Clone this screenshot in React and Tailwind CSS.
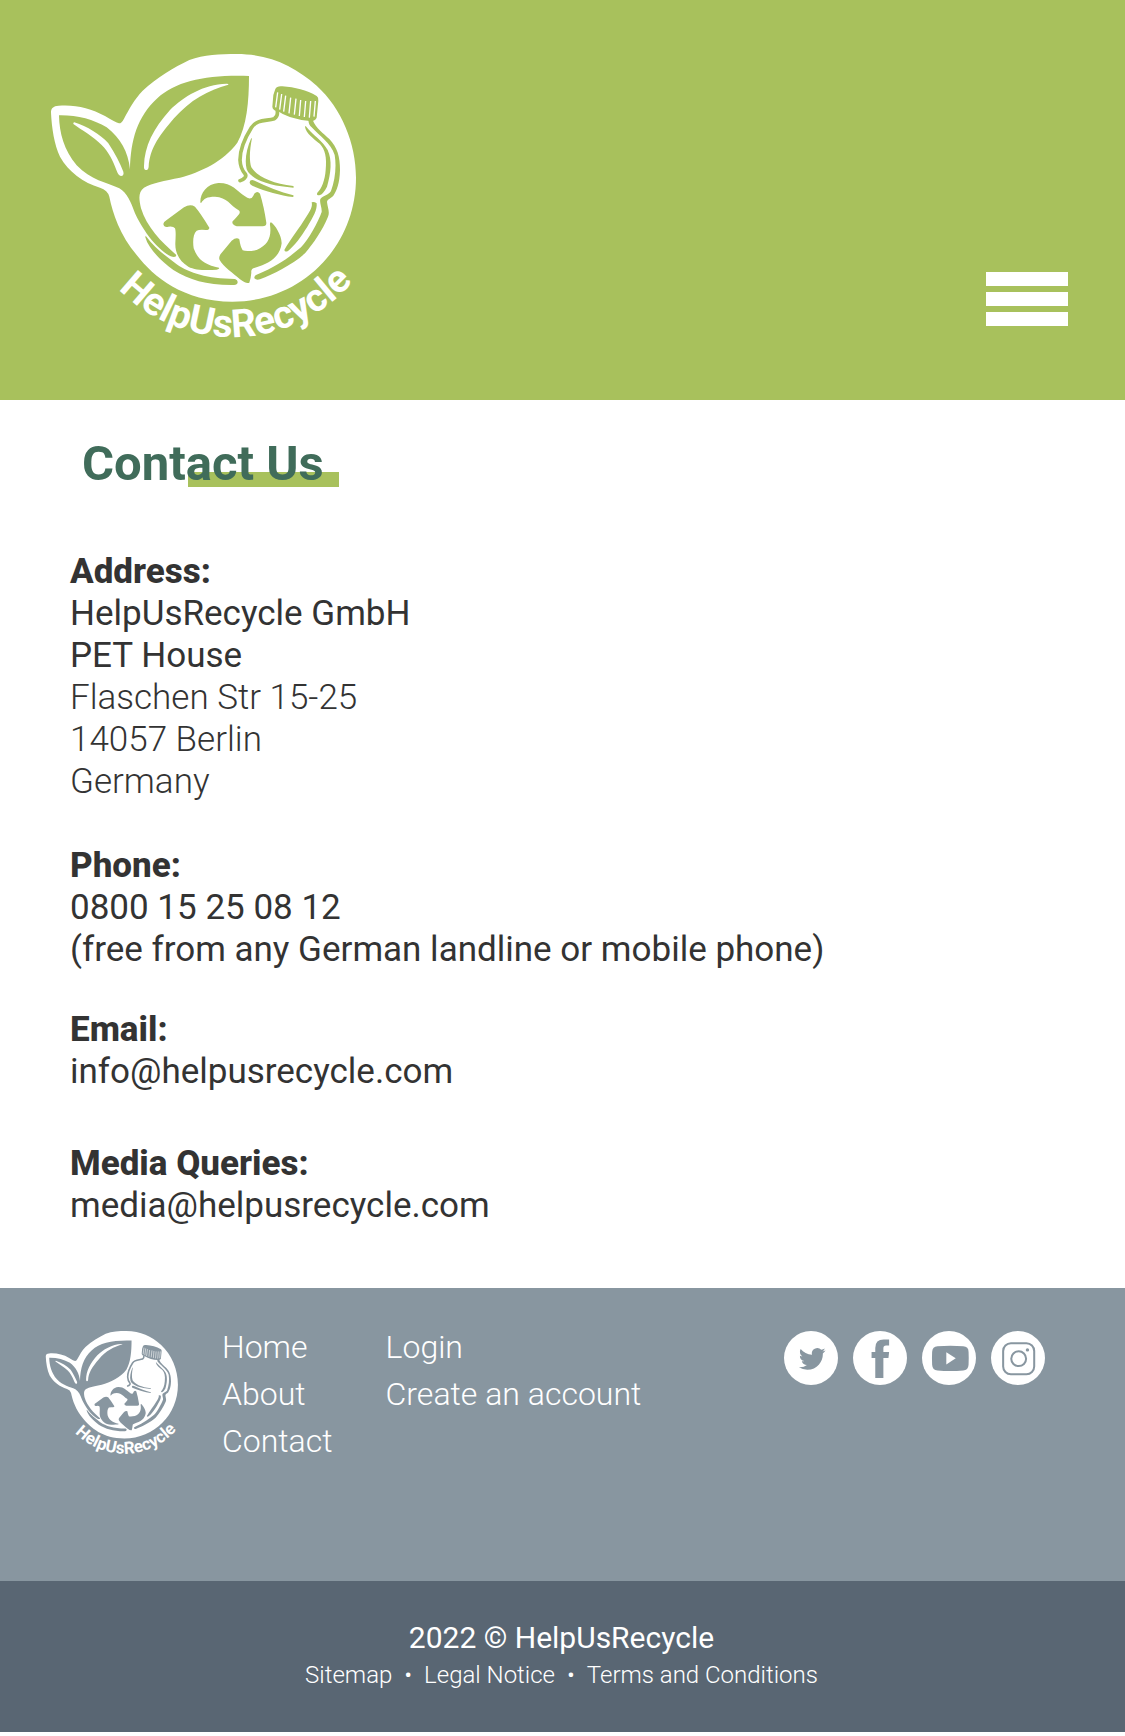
import React from "react";

/* `className` sets the backdrop colour, used for every cut-out of the emblem. */
function Logo({ className, arcId }) {
  return (
    <svg viewBox="0 0 990 930" className={className} role="img" aria-label="HelpUsRecycle">
      <path
        fill="#fff"
        d="M33 218C33 204 40 198 56 197C105 193 152 204 195 228Q226 247 237 250Q245 250 252 236C268 206 283 178 308 152C350 114 402 82 448 60C492 44 540 42 590 42C690 42 765 80 830 137C905 205 948 310 948 413C948 620 785 785 577 785C430 785 340 710 290 645C240 585 218 520 208 470Q203 450 180 443C130 428 85 395 60 350C43 315 35 262 33 218Z"
      />
      <g fill="currentColor">
        <path d="M57 226C110 225 160 238 200 262C242 295 264 335 270 388C272 300 292 230 352 175C410 122 500 104 627 108C627 185 620 260 592 308C550 365 480 397 420 413C375 422 332 430 312 443C295 455 296 475 303 505C320 560 362 605 409 645Q409 654 392 649C345 625 303 560 285 520C272 485 262 460 238 445C200 428 152 420 110 376C72 330 58 280 57 226Z" />
        <path d="M317 587C345 625 380 650 410 673C450 700 500 716 585 717Q594 720 593 727Q592 735 582 735C500 736 450 720 400 690C360 660 325 625 316 592Z" />
        <path d="M805 240C806 252 809 257 815 262C840 290 872 308 884 345C890 380 885 420 873 453C865 466 850 466 841 477C838 490 846 500 845 516C835 545 805 600 783 622C750 650 710 680 655 702Q642 706 643 714Q648 722 660 718C700 703 760 672 795 640C820 610 848 570 864 530C870 515 863 505 861 486C862 477 872 476 880 467C890 453 899 430 900 390C900 350 892 322 868 297C850 280 828 265 818 240Z" />
        <path d="M797 258C815 282 850 305 863 330C877 360 873 400 861 440Q850 462 838 466Q828 466 832 458C845 447 855 420 857 390C861 352 855 328 840 312C820 295 798 280 795 260Z" />
        <path d="M815 487Q822 484 830 490C832 510 820 530 802 560C782 592 765 615 745 632Q735 638 733 630C750 600 780 562 798 532C812 510 818 500 815 487Z" />
      </g>
      <path fill="#fff" d="M103 247C142 260 180 282 205 310C225 340 240 370 250 395Q253 407 243 408Q235 406 230 392C218 360 205 335 185 315C160 290 125 270 100 252Q99 247 103 247Z" />
      <path fill="#fff" d="M565 134C505 150 450 180 402 235C350 295 330 330 326 380Q325 390 318 390Q311 390 312 378C313 320 340 265 390 210C430 170 490 133 560 131Q567 131 565 134Z" />
      <g transform="translate(540 90)">
        <path
          fill="currentColor"
          d="M166 57Q171 47 187 49C225 52 260 60 290 78Q296 82 295 92L290 143Q285 154 270 153C235 150 205 142 178 126Q157 121 157 110L160 75Z"
        />
        <path
          fill="none"
          stroke="#fff"
          strokeWidth="4"
          d="M173 67l-6 45M185 72l-6 47M197 77l-6 48M212 83l-5 47M228 86l-5 48M242 90l-4 48M257 93l-4 48M272 93l-4 50M286 93l-4 47"
        />
        <path
          fill="none"
          stroke="currentColor"
          strokeWidth="11"
          strokeLinecap="round"
          d="M172 125Q174 139 163 146C140 154 112 146 94 173C77 200 60 240 60 270C61 290 66 301 75 311Q80 318 74 324Q69 330 60 332"
        />
        <g fill="currentColor">
          <path d="M96 204C89 240 87 270 94 292C112 320 155 340 220 348Q222 351 220 353C150 348 93 330 80 298C73 270 80 235 93 206Z" />
          <path d="M89 337Q90 327 104 332C140 350 180 365 220 376Q222 379 219 381C180 376 130 362 97 347Q88 342 89 337Z" />
        </g>
      </g>
      <g fill="currentColor" transform="translate(300 390)">
        <path d="M181 98C180 70 200 42 235 39C275 38 290 62 315 79Q325 88 335 84Q339 80 343 71Q352 61 360 71Q372 110 379 158Q380 168 368 169L290 169Q276 165 277 155Q282 151 297 133Q302 125 296 121C270 105 262 82 225 80C200 80 192 86 184 98Z" />
        <path d="M70 162Q70 156 80 150L132 112Q150 101 165 110Q182 130 208 173Q208 180 198 180Q178 178 170 182C159 192 158 215 161 235C172 268 195 285 237 293Q240 298 230 299C200 301 165 301 145 290C120 275 105 250 106 220C107 200 108 185 105 175Q100 168 85 170Q72 173 70 162Z" />
        <path d="M393 157C405 165 425 195 425 220C420 260 390 280 345 293Q332 295 334 308Q333 322 328 338Q318 342 300 328C280 310 250 290 239 270Q235 262 242 252L275 212Q290 200 298 208Q301 230 308 241Q320 246 350 240C385 225 395 200 390 165Q389 157 393 157Z" />
      </g>
      <path id={arcId} fill="none" d="M99 413A478 478 0 0 0 1055 413" />
      <text fill="#fff" className="font-['Roboto',sans-serif] text-[117px] font-bold" textAnchor="middle">
        <textPath href={"#" + arcId} startOffset="51%">
          HelpUsRecycle
        </textPath>
      </text>
    </svg>
  );
}

const socials = [
  {
    name: "Twitter",
    art: (
      <path
        fill="currentColor"
        transform="translate(44 43) scale(3.3)"
        d="M23.953 4.57a10 10 0 01-2.825.775 4.958 4.958 0 002.163-2.723c-.951.555-2.005.959-3.127 1.184a4.92 4.92 0 00-8.384 4.482C7.69 8.095 4.067 6.13 1.64 3.162a4.822 4.822 0 00-.666 2.475c0 1.71.87 3.213 2.188 4.096a4.904 4.904 0 01-2.228-.616v.06a4.923 4.923 0 003.946 4.827 4.996 4.996 0 01-2.212.085 4.936 4.936 0 004.604 3.417 9.867 9.867 0 01-6.102 2.105c-.39 0-.779-.023-1.17-.067a13.995 13.995 0 007.557 2.209c9.053 0 13.998-7.496 13.998-13.985 0-.21 0-.42-.015-.63A9.935 9.935 0 0024 4.59z"
      />
    ),
  },
  {
    name: "Facebook",
    art: <path fill="currentColor" d="M107 25V43H98Q90 43 90 51V62H107L105 80H90V139H66V80H55V62H66V50Q66 25 91 25Z" />,
  },
  {
    name: "YouTube",
    art: (
      <>
        <path fill="currentColor" d="M46 45Q84 42 122 45Q138 46 138 62Q139 81 138 100Q137 116 122 117Q84 120 46 117Q31 116 30 100Q29 81 30 62Q31 46 46 45Z" />
        <path fill="#fff" d="M72 63L100 81L72 99Z" />
      </>
    ),
  },
  {
    name: "Instagram",
    art: (
      <>
        <g fill="none" stroke="currentColor" strokeWidth="6">
          <rect x="36" y="36" width="92" height="92" rx="23" />
          <circle cx="82" cy="82" r="22" />
        </g>
        <circle cx="108" cy="56" r="5" fill="currentColor" />
      </>
    ),
  },
];

function Links({ items }) {
  return (
    <ul>
      {items.map((item) => (
        <li key={item}>
          <a href="#">{item}</a>
        </li>
      ))}
    </ul>
  );
}

function Block({ title, children, className }) {
  return (
    <section className={className}>
      <h2 className="font-extrabold">{title}</h2>
      {children}
    </section>
  );
}

export default function App() {
  return (
    <div className="bg-white font-['Roboto',sans-serif] text-[#333333]">
      <header className="flex items-end justify-between bg-[#a8c15c] pt-10 pr-[57px] pb-[50px] pl-10">
        <a href="#">
          <Logo className="block w-[330px] text-[#a8c15c]" arcId="header-arc" />
        </a>
        <button type="button" aria-label="Open menu" className="mb-6 flex flex-col gap-1.5">
          <span className="h-3.5 w-[82px] bg-white" />
          <span className="h-3.5 w-[82px] bg-white" />
          <span className="h-3.5 w-[82px] bg-white" />
        </button>
      </header>

      <main className="px-[70px] pt-[34px] pb-[61px] text-[35px] leading-[42px]">
        <h1 className="relative isolate ml-3 w-fit text-[49px] leading-[59px] font-bold text-[#406c5a]">
          <span className="absolute -right-[15px] bottom-1.5 -z-10 h-[15px] w-[151px] bg-[#a8c15c]" />
          Contact Us
        </h1>
        <Block title="Address:" className="mt-[58px]">
          <address className="not-italic">
            <p>HelpUsRecycle GmbH</p>
            <p>PET House</p>
            <p className="font-light">Flaschen Str 15-25</p>
            <p className="font-light">14057 Berlin</p>
            <p className="font-light">Germany</p>
          </address>
        </Block>
        <Block title="Phone:" className="mt-[42px]">
          <p>0800 15 25 08 12</p>
          <p>(free from any German landline or mobile phone)</p>
        </Block>
        <Block title="Email:" className="mt-[38px]">
          <a href="mailto:info@helpusrecycle.com">info@helpusrecycle.com</a>
        </Block>
        <Block title="Media Queries:" className="mt-[50px]">
          <a href="mailto:media@helpusrecycle.com">media@helpusrecycle.com</a>
        </Block>
      </main>

      <footer className="text-white">
        <div className="flex items-start bg-[#8896a0] pt-9 pr-20 pb-[116px] pl-[41px]">
          <Logo className="mt-px block w-[143px] text-[#8896a0]" arcId="footer-arc" />
          <nav className="ml-[38px] flex gap-[53px] text-[32px] leading-[47px] font-light">
            <Links items={["Home", "About", "Contact"]} />
            <Links items={["Login", "Create an account"]} />
          </nav>
          <ul className="mt-[7px] ml-auto flex gap-[15px] text-[#8896a0]">
            {socials.map((s) => (
              <li key={s.name}>
                <a href="#" aria-label={s.name}>
                  <svg viewBox="0 0 160 160" className="block size-[54px]">
                    <circle cx="80" cy="80" r="80" fill="#fff" />
                    {s.art}
                  </svg>
                </a>
              </li>
            ))}
          </ul>
        </div>
        <div className="bg-[#596673] pt-[38px] pr-0.5 pb-[38px] text-center">
          <p className="text-[30px] leading-[38px]">2022 © HelpUsRecycle</p>
          <p className="flex justify-center gap-3 text-[24px] leading-[37px] font-light">
            <a href="#">Sitemap</a>
            <span>•</span>
            <a href="#">Legal Notice</a>
            <span>•</span>
            <a href="#">Terms and Conditions</a>
          </p>
        </div>
      </footer>
    </div>
  );
}
